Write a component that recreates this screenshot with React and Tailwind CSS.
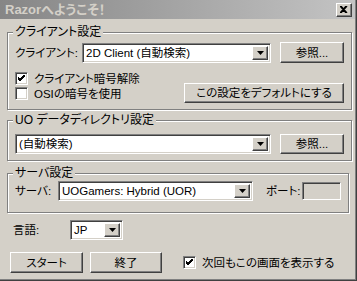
import React from 'react';

const raised =
  'bg-[#d4d0c8] border border-t-white border-l-white border-r-[#404040] border-b-[#404040] shadow-[inset_-1px_-1px_0_#808080,inset_1px_1px_0_#d4d0c8]';
const sunken =
  'border border-t-[#808080] border-l-[#808080] border-r-white border-b-white shadow-[inset_1px_1px_0_#404040,inset_-1px_-1px_0_#d4d0c8]';

function Arrow() {
  return (
    <svg width="7" height="4" viewBox="0 0 7 4">
      <polygon points="0,0 7,0 3.5,4" fill="#000" />
    </svg>
  );
}

function Combo({ text, className }) {
  return (
    <div className={`shrink-0 flex h-[20px] bg-white p-[2px] ${sunken} ${className}`}>
      <div className="flex-1 pl-[1px] leading-[14px] whitespace-nowrap overflow-hidden">{text}</div>
      <div className={`w-[16px] flex items-center justify-center ${raised}`}>
        <Arrow />
      </div>
    </div>
  );
}

function Button({ children, className }) {
  return (
    <button className={`shrink-0 flex items-center justify-center leading-[14px] whitespace-nowrap ${raised} ${className}`}>
      {children}
    </button>
  );
}

function Check({ checked }) {
  return (
    <div className={`shrink-0 w-[13px] h-[13px] bg-white flex items-center justify-center ${sunken}`}>
      {checked && (
        <svg width="7" height="7" viewBox="0 0 7 7">
          <path d="M0 3 L2 5 L7 0 M0 4 L2 6 L7 1 M0 2 L2 4 L7 -1" stroke="#000" strokeWidth="1" fill="none" />
        </svg>
      )}
    </div>
  );
}

function Group({ title, children, className }) {
  return (
    <fieldset className={`w-[342px] border border-[#808080] shadow-[1px_1px_0_#fff,inset_1px_1px_0_#fff] ${className}`}>
      <legend className="ml-[5px] px-[2px] bg-[#d4d0c8] text-[12px] leading-[14px] whitespace-nowrap">{title}</legend>
      <div className="px-[7px]">{children}</div>
    </fieldset>
  );
}

export default function App() {
  return (
    <div className="w-[357px] h-[281px] overflow-hidden bg-[#d4d0c8] border-r border-b border-r-[#404040] border-b-[#404040] text-[11.5px] leading-[14px] text-black font-['Liberation_Sans','Noto_Sans_CJK_JP',sans-serif] [font-feature-settings:'palt']">
      <div className="h-full border-r border-b border-r-[#808080] border-b-[#808080]">
        <div className="h-[19px] flex items-center justify-between bg-gradient-to-r from-[#868686] to-[#c4c4c4]">
          <span className="pl-[5px] font-bold text-[13px] text-[#d4d0c8] whitespace-nowrap">Razorへようこそ！</span>
          <div className={`w-[16px] h-[14px] mr-[3px] flex items-center justify-center ${raised}`}>
            <svg width="8" height="7" viewBox="0 0 8 7">
              <path d="M0 0 L6 7 M1 0 L7 7 M6 0 L0 7 M7 0 L1 7" stroke="#000" strokeWidth="1.2" fill="none" />
            </svg>
          </div>
        </div>

        <div className="pl-[7px] pt-[6px]">
          <Group title="クライアント設定">
            <div className="pt-[3px] flex items-center">
              <span className="w-[67px] shrink-0 whitespace-nowrap">クライアント:</span>
              <Combo text="2D Client (自動検索)" className="w-[189px]" />
              <Button className="ml-[9px] w-[64px] h-[21px]">参照...</Button>
            </div>
            <div className="mt-[9px] flex justify-between items-start pb-[6px]">
              <div className="flex flex-col gap-[2px]">
                <div className="flex items-center gap-[6px] h-[13px] whitespace-nowrap">
                  <Check checked />
                  <span>クライアント暗号解除</span>
                </div>
                <div className="flex items-center gap-[6px] h-[13px] whitespace-nowrap">
                  <Check />
                  <span>OSIの暗号を使用</span>
                </div>
              </div>
              <Button className="mt-[11px] w-[160px] h-[20px]">この設定をデフォルトにする</Button>
            </div>
          </Group>

          <Group title="UO データディレクトリ設定" className="mt-[3px]">
            <div className="pt-[7px] pb-[6px] flex items-center">
              <Combo text="(自動検索)" className="w-[256px]" />
              <Button className="ml-[9px] w-[64px] h-[20px]">参照...</Button>
            </div>
          </Group>

          <Group title="サーバ設定" className="mt-[5px]">
            <div className="pt-[1px] pb-[11px] flex items-center">
              <span className="w-[43px] shrink-0 whitespace-nowrap">サーバ:</span>
              <Combo text="UOGamers: Hybrid (UOR)" className="w-[195px]" />
              <span className="ml-[13px] w-[36px] shrink-0 whitespace-nowrap">ポート:</span>
              <div className={`shrink-0 w-[39px] h-[18px] bg-[#d4d0c8] ${sunken}`} />
            </div>
          </Group>

          <div className="mt-[7px] flex items-center">
            <span className="ml-[6px] w-[57px] shrink-0 whitespace-nowrap">言語:</span>
            <Combo text="JP" className="w-[53px]" />
          </div>

          <div className="mt-[12px] flex items-center">
            <Button className="ml-[3px] w-[73px] h-[21px]">スタート</Button>
            <Button className="ml-[7px] w-[72px] h-[21px]">終了</Button>
            <div className="ml-[21px] flex items-center gap-[6px] whitespace-nowrap">
              <Check checked />
              <span>次回もこの画面を表示する</span>
            </div>
          </div>
        </div>
      </div>
    </div>
  );
}
